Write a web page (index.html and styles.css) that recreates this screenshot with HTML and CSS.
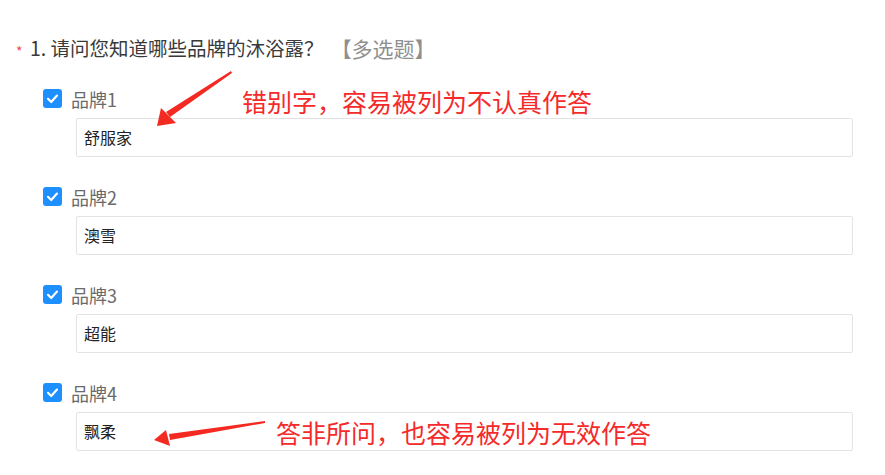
FILE: index.html
```html
<!DOCTYPE html>
<html lang="zh-CN">
<head>
<meta charset="UTF-8">
<meta name="viewport" content="width=device-width, initial-scale=1.0">
<title>问卷题目</title>
<link rel="stylesheet" href="styles.css">
</head>
<body>
  <div id="page">
    <div class="question-title">
      <span class="required">*</span>
      <span class="q-text">1. 请问您知道哪些品牌的沐浴露？</span>
      <span class="q-type">【多选题】</span>
    </div>

    <div class="options">
      <div class="option">
        <div class="option-head">
          <span class="check"><svg viewBox="0 0 19 19" width="19" height="19"><path d="M5 9.8 L8.2 13 L14 6.6" fill="none" stroke="#fff" stroke-width="2.2" stroke-linecap="round" stroke-linejoin="round"/></svg></span>
          <span class="option-label">品牌1</span>
        </div>
        <div class="option-input">舒服家</div>
      </div>
      <div class="option">
        <div class="option-head">
          <span class="check"><svg viewBox="0 0 19 19" width="19" height="19"><path d="M5 9.8 L8.2 13 L14 6.6" fill="none" stroke="#fff" stroke-width="2.2" stroke-linecap="round" stroke-linejoin="round"/></svg></span>
          <span class="option-label">品牌2</span>
        </div>
        <div class="option-input">澳雪</div>
      </div>
      <div class="option">
        <div class="option-head">
          <span class="check"><svg viewBox="0 0 19 19" width="19" height="19"><path d="M5 9.8 L8.2 13 L14 6.6" fill="none" stroke="#fff" stroke-width="2.2" stroke-linecap="round" stroke-linejoin="round"/></svg></span>
          <span class="option-label">品牌3</span>
        </div>
        <div class="option-input">超能</div>
      </div>
      <div class="option">
        <div class="option-head">
          <span class="check"><svg viewBox="0 0 19 19" width="19" height="19"><path d="M5 9.8 L8.2 13 L14 6.6" fill="none" stroke="#fff" stroke-width="2.2" stroke-linecap="round" stroke-linejoin="round"/></svg></span>
          <span class="option-label">品牌4</span>
        </div>
        <div class="option-input">飘柔</div>
      </div>
    </div>

    <!-- annotations drawn over the form -->
    <svg class="arrows" width="885" height="475" viewBox="0 0 885 475">
      <polygon points="231,71 232,73 170,117 166,112" fill="#f42a22"/>
      <polygon points="157,126 161,108 176,123" fill="#f42a22"/>
      <polygon points="265,421 265,423 170,440 169,434" fill="#f42a22"/>
      <polygon points="154,440 166,430 170,446" fill="#f42a22"/>
    </svg>
    <div class="note note-1">错别字，容易被列为不认真作答</div>
    <div class="note note-2">答非所问，也容易被列为无效作答</div>
  </div>
</body>
</html>
```

FILE: styles.css
```css
body {
  margin: 0;
  padding: 0;
  background-color: #ffffff;
  font-family: "Microsoft YaHei", "Noto Sans CJK SC", sans-serif;
  color: #333333;
}
#page {
  position: relative;
  width: 885px;
  height: 475px;
  overflow: hidden;
  padding: 36px 0 0 16px;
  box-sizing: border-box;
}
.question-title {
  display: flex;
  align-items: center;
  height: 24px;
  font-size: 19.5px;
  line-height: 24px;
  white-space: nowrap;
}
.required {
  color: #f5475a;
  font-size: 14px;
  width: 14px;
  margin-top: 5px;
}
.q-text {
  color: #3a3a3a;
}
.q-type {
  color: #8f8f8f;
  font-size: 21px;
  margin-left: 7px;
}
.options {
  margin: 29px 0 0 27px;
  display: flex;
  flex-direction: column;
  gap: 30px;
}
.option-head {
  display: flex;
  align-items: center;
  height: 19px;
}
.check {
  width: 19px;
  height: 19px;
  background-color: #1e8fff;
  border-radius: 3px;
  display: flex;
}
.option-label {
  margin-left: 9px;
  font-size: 18px;
  color: #6a6a6a;
}
.option-input {
  margin: 10px 0 0 33px;
  width: 777px;
  height: 39px;
  box-sizing: border-box;
  border: 1px solid #e3e3e3;
  border-radius: 2px;
  padding-left: 7px;
  font-size: 16px;
  line-height: 37px;
  color: #222222;
}
.arrows {
  position: absolute;
  left: 0;
  top: 0;
}
.note {
  position: absolute;
  font-size: 25px;
  line-height: 30px;
  color: #f52a2a;
  white-space: nowrap;
}
.note-1 {
  left: 242px;
  top: 86px;
}
.note-2 {
  left: 276px;
  top: 417px;
}
```
